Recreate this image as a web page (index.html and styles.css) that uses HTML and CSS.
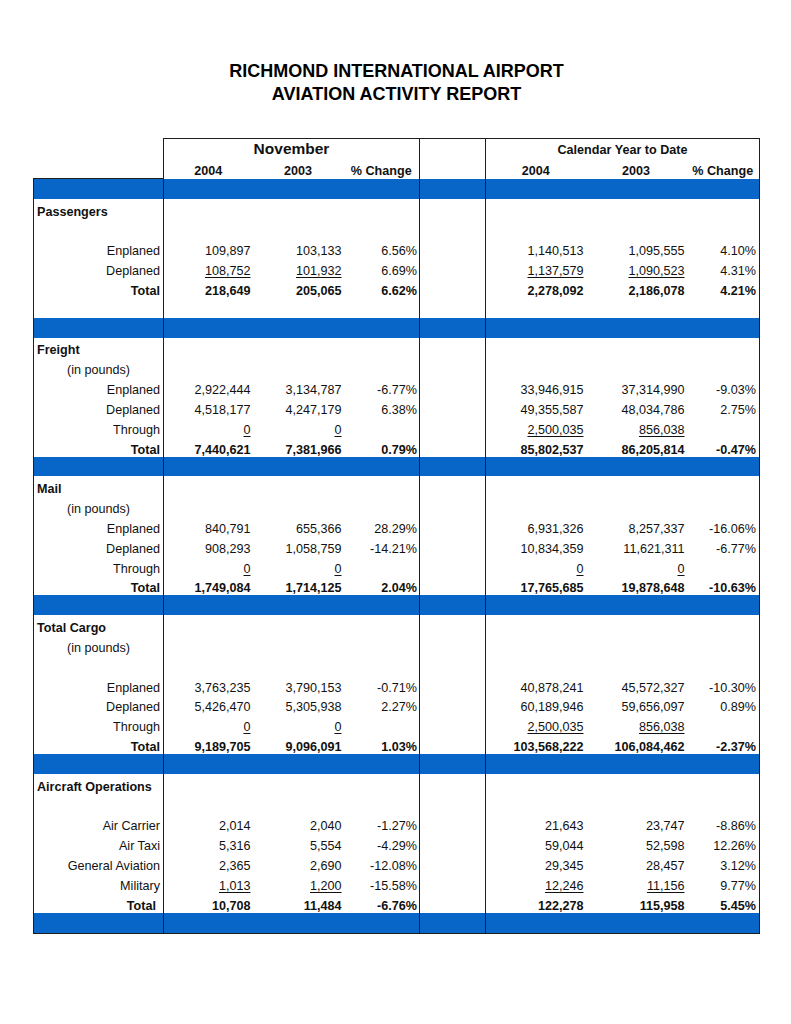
FILE: index.html
```html
<!DOCTYPE html>
<html lang="en">
<head>
<meta charset="utf-8">
<title>Richmond International Airport - Aviation Activity Report</title>
<link rel="stylesheet" href="styles.css">
</head>
<body>
<div class="page">
  <h1 class="title">RICHMOND INTERNATIONAL AIRPORT<br>AVIATION ACTIVITY REPORT</h1>
  <table class="report">
    <colgroup>
      <col class="w0"><col class="w1"><col class="w2"><col class="w3"><col class="wsp"><col class="w4"><col class="w5"><col class="w6">
    </colgroup>
    <thead>
      <tr class="hd1">
        <td class="c0"></td>
        <td colspan="3" class="grp month">November</td>
        <td class="sp"></td>
        <td colspan="3" class="grp ytd">Calendar Year to Date</td>
      </tr>
      <tr class="hd2">
        <td class="c0"></td>
        <td class="c1">2004</td><td class="c2">2003</td><td class="c3">% Change</td>
        <td class="sp"></td>
        <td class="c4">2004</td><td class="c5">2003</td><td class="c6">% Change</td>
      </tr>
    </thead>
    <tbody>
      <tr class="band first"><td class="c0"></td><td class="c1"></td><td class="c2"></td><td class="c3"></td><td class="sp"></td><td class="c4"></td><td class="c5"></td><td class="c6"></td></tr>
      <tr><td class="c0 sec">Passengers</td><td class="c1"></td><td class="c2"></td><td class="c3"></td><td class="sp"></td><td class="c4"></td><td class="c5"></td><td class="c6"></td></tr>
      <tr><td class="c0"></td><td class="c1"></td><td class="c2"></td><td class="c3"></td><td class="sp"></td><td class="c4"></td><td class="c5"></td><td class="c6"></td></tr>
      <tr><td class="c0">Enplaned</td><td class="c1">109,897</td><td class="c2">103,133</td><td class="c3">6.56%</td><td class="sp"></td><td class="c4">1,140,513</td><td class="c5">1,095,555</td><td class="c6">4.10%</td></tr>
      <tr><td class="c0">Deplaned</td><td class="c1"><u>108,752</u></td><td class="c2"><u>101,932</u></td><td class="c3">6.69%</td><td class="sp"></td><td class="c4"><u>1,137,579</u></td><td class="c5"><u>1,090,523</u></td><td class="c6">4.31%</td></tr>
      <tr class="total"><td class="c0">Total</td><td class="c1">218,649</td><td class="c2">205,065</td><td class="c3">6.62%</td><td class="sp"></td><td class="c4">2,278,092</td><td class="c5">2,186,078</td><td class="c6">4.21%</td></tr>
      <tr><td class="c0"></td><td class="c1"></td><td class="c2"></td><td class="c3"></td><td class="sp"></td><td class="c4"></td><td class="c5"></td><td class="c6"></td></tr>

      <tr class="band"><td class="c0"></td><td class="c1"></td><td class="c2"></td><td class="c3"></td><td class="sp"></td><td class="c4"></td><td class="c5"></td><td class="c6"></td></tr>
      <tr><td class="c0 sec">Freight</td><td class="c1"></td><td class="c2"></td><td class="c3"></td><td class="sp"></td><td class="c4"></td><td class="c5"></td><td class="c6"></td></tr>
      <tr><td class="c0 sub">(in pounds)</td><td class="c1"></td><td class="c2"></td><td class="c3"></td><td class="sp"></td><td class="c4"></td><td class="c5"></td><td class="c6"></td></tr>
      <tr><td class="c0">Enplaned</td><td class="c1">2,922,444</td><td class="c2">3,134,787</td><td class="c3">-6.77%</td><td class="sp"></td><td class="c4">33,946,915</td><td class="c5">37,314,990</td><td class="c6">-9.03%</td></tr>
      <tr><td class="c0">Deplaned</td><td class="c1">4,518,177</td><td class="c2">4,247,179</td><td class="c3">6.38%</td><td class="sp"></td><td class="c4">49,355,587</td><td class="c5">48,034,786</td><td class="c6">2.75%</td></tr>
      <tr><td class="c0">Through</td><td class="c1"><u>0</u></td><td class="c2"><u>0</u></td><td class="c3"></td><td class="sp"></td><td class="c4"><u>2,500,035</u></td><td class="c5"><u>856,038</u></td><td class="c6"></td></tr>
      <tr class="total"><td class="c0">Total</td><td class="c1">7,440,621</td><td class="c2">7,381,966</td><td class="c3">0.79%</td><td class="sp"></td><td class="c4">85,802,537</td><td class="c5">86,205,814</td><td class="c6">-0.47%</td></tr>

      <tr class="band"><td class="c0"></td><td class="c1"></td><td class="c2"></td><td class="c3"></td><td class="sp"></td><td class="c4"></td><td class="c5"></td><td class="c6"></td></tr>
      <tr><td class="c0 sec">Mail</td><td class="c1"></td><td class="c2"></td><td class="c3"></td><td class="sp"></td><td class="c4"></td><td class="c5"></td><td class="c6"></td></tr>
      <tr><td class="c0 sub">(in pounds)</td><td class="c1"></td><td class="c2"></td><td class="c3"></td><td class="sp"></td><td class="c4"></td><td class="c5"></td><td class="c6"></td></tr>
      <tr><td class="c0">Enplaned</td><td class="c1">840,791</td><td class="c2">655,366</td><td class="c3">28.29%</td><td class="sp"></td><td class="c4">6,931,326</td><td class="c5">8,257,337</td><td class="c6">-16.06%</td></tr>
      <tr><td class="c0">Deplaned</td><td class="c1">908,293</td><td class="c2">1,058,759</td><td class="c3">-14.21%</td><td class="sp"></td><td class="c4">10,834,359</td><td class="c5">11,621,311</td><td class="c6">-6.77%</td></tr>
      <tr><td class="c0">Through</td><td class="c1"><u>0</u></td><td class="c2"><u>0</u></td><td class="c3"></td><td class="sp"></td><td class="c4"><u>0</u></td><td class="c5"><u>0</u></td><td class="c6"></td></tr>
      <tr class="total"><td class="c0">Total</td><td class="c1">1,749,084</td><td class="c2">1,714,125</td><td class="c3">2.04%</td><td class="sp"></td><td class="c4">17,765,685</td><td class="c5">19,878,648</td><td class="c6">-10.63%</td></tr>

      <tr class="band"><td class="c0"></td><td class="c1"></td><td class="c2"></td><td class="c3"></td><td class="sp"></td><td class="c4"></td><td class="c5"></td><td class="c6"></td></tr>
      <tr><td class="c0 sec">Total Cargo</td><td class="c1"></td><td class="c2"></td><td class="c3"></td><td class="sp"></td><td class="c4"></td><td class="c5"></td><td class="c6"></td></tr>
      <tr><td class="c0 sub">(in pounds)</td><td class="c1"></td><td class="c2"></td><td class="c3"></td><td class="sp"></td><td class="c4"></td><td class="c5"></td><td class="c6"></td></tr>
      <tr><td class="c0"></td><td class="c1"></td><td class="c2"></td><td class="c3"></td><td class="sp"></td><td class="c4"></td><td class="c5"></td><td class="c6"></td></tr>
      <tr><td class="c0">Enplaned</td><td class="c1">3,763,235</td><td class="c2">3,790,153</td><td class="c3">-0.71%</td><td class="sp"></td><td class="c4">40,878,241</td><td class="c5">45,572,327</td><td class="c6">-10.30%</td></tr>
      <tr><td class="c0">Deplaned</td><td class="c1">5,426,470</td><td class="c2">5,305,938</td><td class="c3">2.27%</td><td class="sp"></td><td class="c4">60,189,946</td><td class="c5">59,656,097</td><td class="c6">0.89%</td></tr>
      <tr><td class="c0">Through</td><td class="c1"><u>0</u></td><td class="c2"><u>0</u></td><td class="c3"></td><td class="sp"></td><td class="c4"><u>2,500,035</u></td><td class="c5"><u>856,038</u></td><td class="c6"></td></tr>
      <tr class="total"><td class="c0">Total</td><td class="c1">9,189,705</td><td class="c2">9,096,091</td><td class="c3">1.03%</td><td class="sp"></td><td class="c4">103,568,222</td><td class="c5">106,084,462</td><td class="c6">-2.37%</td></tr>

      <tr class="band"><td class="c0"></td><td class="c1"></td><td class="c2"></td><td class="c3"></td><td class="sp"></td><td class="c4"></td><td class="c5"></td><td class="c6"></td></tr>
      <tr><td class="c0 sec">Aircraft Operations</td><td class="c1"></td><td class="c2"></td><td class="c3"></td><td class="sp"></td><td class="c4"></td><td class="c5"></td><td class="c6"></td></tr>
      <tr><td class="c0"></td><td class="c1"></td><td class="c2"></td><td class="c3"></td><td class="sp"></td><td class="c4"></td><td class="c5"></td><td class="c6"></td></tr>
      <tr><td class="c0">Air Carrier</td><td class="c1">2,014</td><td class="c2">2,040</td><td class="c3">-1.27%</td><td class="sp"></td><td class="c4">21,643</td><td class="c5">23,747</td><td class="c6">-8.86%</td></tr>
      <tr><td class="c0">Air Taxi</td><td class="c1">5,316</td><td class="c2">5,554</td><td class="c3">-4.29%</td><td class="sp"></td><td class="c4">59,044</td><td class="c5">52,598</td><td class="c6">12.26%</td></tr>
      <tr><td class="c0">General Aviation</td><td class="c1">2,365</td><td class="c2">2,690</td><td class="c3">-12.08%</td><td class="sp"></td><td class="c4">29,345</td><td class="c5">28,457</td><td class="c6">3.12%</td></tr>
      <tr><td class="c0">Military</td><td class="c1"><u>1,013</u></td><td class="c2"><u>1,200</u></td><td class="c3">-15.58%</td><td class="sp"></td><td class="c4"><u>12,246</u></td><td class="c5"><u>11,156</u></td><td class="c6">9.77%</td></tr>
      <tr class="total"><td class="c0 inset">Total</td><td class="c1">10,708</td><td class="c2">11,484</td><td class="c3">-6.76%</td><td class="sp"></td><td class="c4">122,278</td><td class="c5">115,958</td><td class="c6">5.45%</td></tr>

      <tr class="band last"><td class="c0"></td><td class="c1"></td><td class="c2"></td><td class="c3"></td><td class="sp"></td><td class="c4"></td><td class="c5"></td><td class="c6"></td></tr>
    </tbody>
  </table>
</div>
</body>
</html>
```

FILE: styles.css
```css
html, body {
  margin: 0;
  padding: 0;
  background: #ffffff;
}

body {
  font-family: "Liberation Sans", Arial, sans-serif;
  color: #111111;
}

.page {
  padding: 60px 0 0 33px;
}

.title {
  width: 727px;
  margin: 0 0 32px 0;
  text-align: center;
  font-size: 18px;
  line-height: 23px;
  font-weight: bold;
  color: #000000;
}

.report {
  width: 727px;
  table-layout: fixed;
  border-collapse: collapse;
  font-size: 12.6px;
}

.w0 { width: 130px; }
.w1 { width: 89px; }
.w2 { width: 91px; }
.w3 { width: 76px; }
.wsp { width: 66px; }
.w4 { width: 100px; }
.w5 { width: 102px; }
.w6 { width: 72px; }

.report td {
  height: 19.84px;
  padding: 0 2px;
  text-align: right;
  white-space: nowrap;
  line-height: 14px;
  vertical-align: bottom;
  overflow: hidden;
}

.report td.c0 {
  border-left: 1px solid #1e1e1e;
  border-right: 1px solid #1e1e1e;
  padding-right: 3px;
}

.report td.c3,
.report td.sp,
.report td.c6 {
  border-right: 1px solid #1e1e1e;
}

.report td.c5,
.report td.c6 {
  padding-right: 3px;
}

/* header */
.hd1 td {
  height: 19px;
  font-weight: bold;
  text-align: center;
  border-top: 1px solid #1e1e1e;
  vertical-align: middle;
}

.hd1 td.month {
  font-size: 15.5px;
  border-right: 1px solid #1e1e1e;
}

.hd1 td.ytd {
  font-size: 12.6px;
  border-right: 1px solid #1e1e1e;
  padding-top: 1px;
}

.hd2 td {
  height: 18px;
  font-weight: bold;
  text-align: center;
  vertical-align: bottom;
  padding-bottom: 1px;
}

.hd1 td.c0,
.hd2 td.c0 {
  border-left: none;
  border-top: none;
}

/* blue bands */
.band td {
  background: #0866c9;
}

.band.first td.c0 {
  border-top: 1px solid #1e1e1e;
}

.band.last td {
  height: 20.5px;
  border-bottom: 1px solid #1e1e1e;
}

/* labels */
.report td.sec {
  text-align: left;
  font-weight: bold;
  padding-left: 3px;
}

.report td.sub {
  text-align: left;
  padding-left: 33px;
}

.report td.inset {
  padding-right: 7px;
}

.total td {
  font-weight: bold;
}

.report u {
  text-decoration: underline;
  text-decoration-thickness: 1px;
  text-underline-offset: 2px;
}
```
